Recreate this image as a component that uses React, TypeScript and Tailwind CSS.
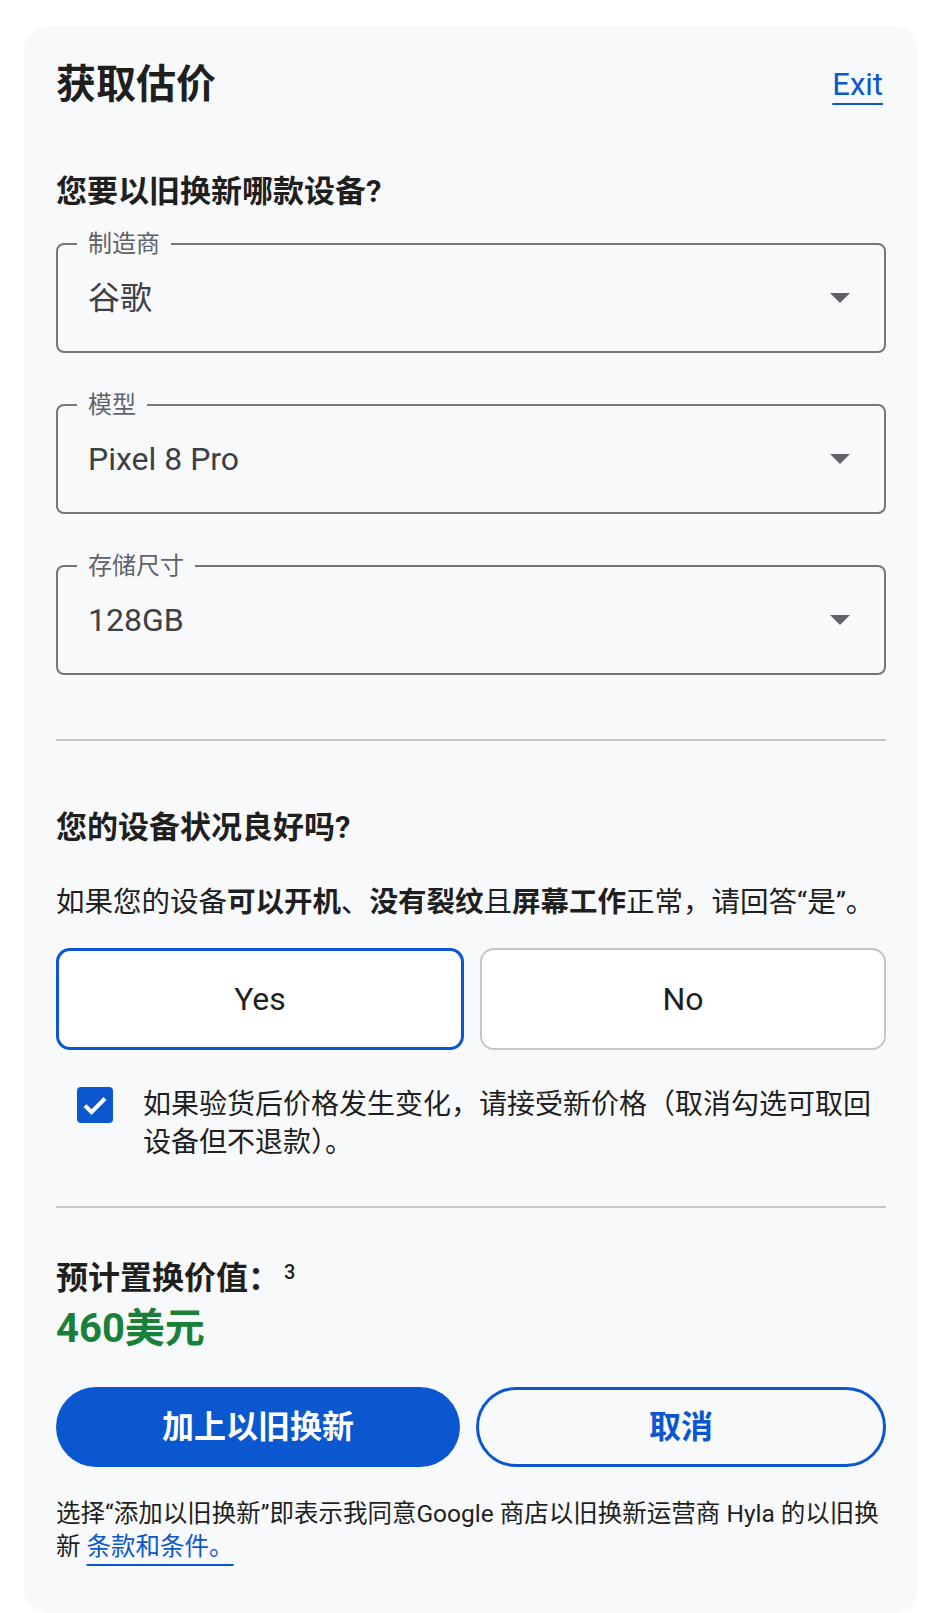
import React from "react";

const font = "font-['Roboto','Noto_Sans_CJK_SC',sans-serif]";

function SelectField({ label, value, first }: { label: string; value: string; first?: boolean }) {
  return (
    <div
      className={`relative flex h-[110px] items-center rounded-[8px] border-2 border-[#79747e] pl-[30px] pr-[34px] ${
        first ? "mt-[31px]" : "mt-[51px]"
      }`}
    >
      <span className="absolute left-[19px] top-[-16px] bg-[#f8f9fa] px-[11px] text-[24px] leading-[30px] text-[#5f6368]">
        {label}
      </span>
      <span className="text-[32px] leading-[40px] text-[#3c4043]">{value}</span>
      <svg className="ml-auto" width="20" height="10" viewBox="0 0 20 10">
        <path d="M0 0h20L10 10z" fill="#5f6368" />
      </svg>
    </div>
  );
}

export default function App() {
  return (
    <div className={`min-h-screen bg-white pt-[26px] pb-[20px] ${font} text-[#1f1f1f]`}>
      <div className="ml-[24px] w-[894px] rounded-[24px] bg-[#f8f9fa] px-[32px] pt-[35px] pb-[50px]">
        <div className="flex items-center justify-between">
          <h1 className="text-[40px] font-bold leading-[48px]">获取估价</h1>
          <a className="mr-[3px] text-[31px] leading-[36px] text-[#0b57d0] underline decoration-2 underline-offset-[8px]">
            Exit
          </a>
        </div>

        <h2 className="mt-[63px] text-[31px] font-bold leading-[40px]">您要以旧换新哪款设备?</h2>

        <SelectField first label="制造商" value="谷歌" />
        <SelectField label="模型" value="Pixel 8 Pro" />
        <SelectField label="存储尺寸" value="128GB" />

        <div className="mt-[64px] h-[2px] bg-[#c4c7c5]" />

        <h2 className="mt-[67px] text-[31px] font-bold leading-[40px]">您的设备状况良好吗?</h2>
        <p className="mt-[35px] whitespace-nowrap text-[28.5px] leading-[40px] text-[#1f1f1f]">
          如果您的设备<b>可以开机</b>、<b>没有裂纹</b>且<b>屏幕工作</b>正常，请回答“是”。
        </p>

        <div className="mt-[25px] flex gap-[16px]">
          <button className="h-[102px] flex-1 rounded-[14px] border-[3px] border-[#0b57d0] bg-white text-[32px] text-[#1f1f1f]">
            Yes
          </button>
          <button className="h-[102px] flex-1 rounded-[14px] border-2 border-[#c4c7c5] bg-white text-[32px] text-[#1f1f1f]">
            No
          </button>
        </div>

        <div className="mt-[36px] flex items-start gap-[30px] pl-[21px]">
          <span className="mt-[1px] flex h-[36px] w-[36px] shrink-0 items-center justify-center rounded-[4px] bg-[#0b57d0]">
            <svg width="30" height="30" viewBox="0 0 24 24" fill="none">
              <path d="M4 12.5l5.2 5.2L20 6.8" stroke="white" strokeWidth="3.2" />
            </svg>
          </span>
          <p className="text-[28px] leading-[38px] text-[#1f1f1f]">
            如果验货后价格发生变化，请接受新价格（取消勾选可取回设备但不退款）。
          </p>
        </div>

        <div className="mt-[44px] h-[2px] bg-[#c4c7c5]" />

        <div className="mt-[50px] flex items-start">
          <h2 className="text-[32px] font-bold leading-[40px]">预计置换价值：</h2>
          <span className="ml-[4px] mt-[2px] text-[20px] font-medium leading-[24px]">3</span>
        </div>
        <div className="mt-[7px] text-[40px] font-bold leading-[48px] text-[#188038]">460美元</div>

        <div className="mt-[34px] flex gap-[16px]">
          <button className="h-[80px] flex-1 rounded-full bg-[#0b57d0] text-[32px] font-bold text-white">
            加上以旧换新
          </button>
          <button className="h-[80px] flex-1 rounded-full border-[3px] border-[#0b57d0] text-[32px] font-bold text-[#0b57d0]">
            取消
          </button>
        </div>

        <p className="mt-[30px] text-[24.5px] leading-[33px] text-[#1f1f1f]">
          选择“添加以旧换新”即表示我同意Google 商店以旧换新运营商 Hyla 的以旧换新{" "}
          <a className="text-[#0b57d0] underline decoration-2 underline-offset-[9px]">条款和条件。</a>
        </p>
      </div>
    </div>
  );
}
